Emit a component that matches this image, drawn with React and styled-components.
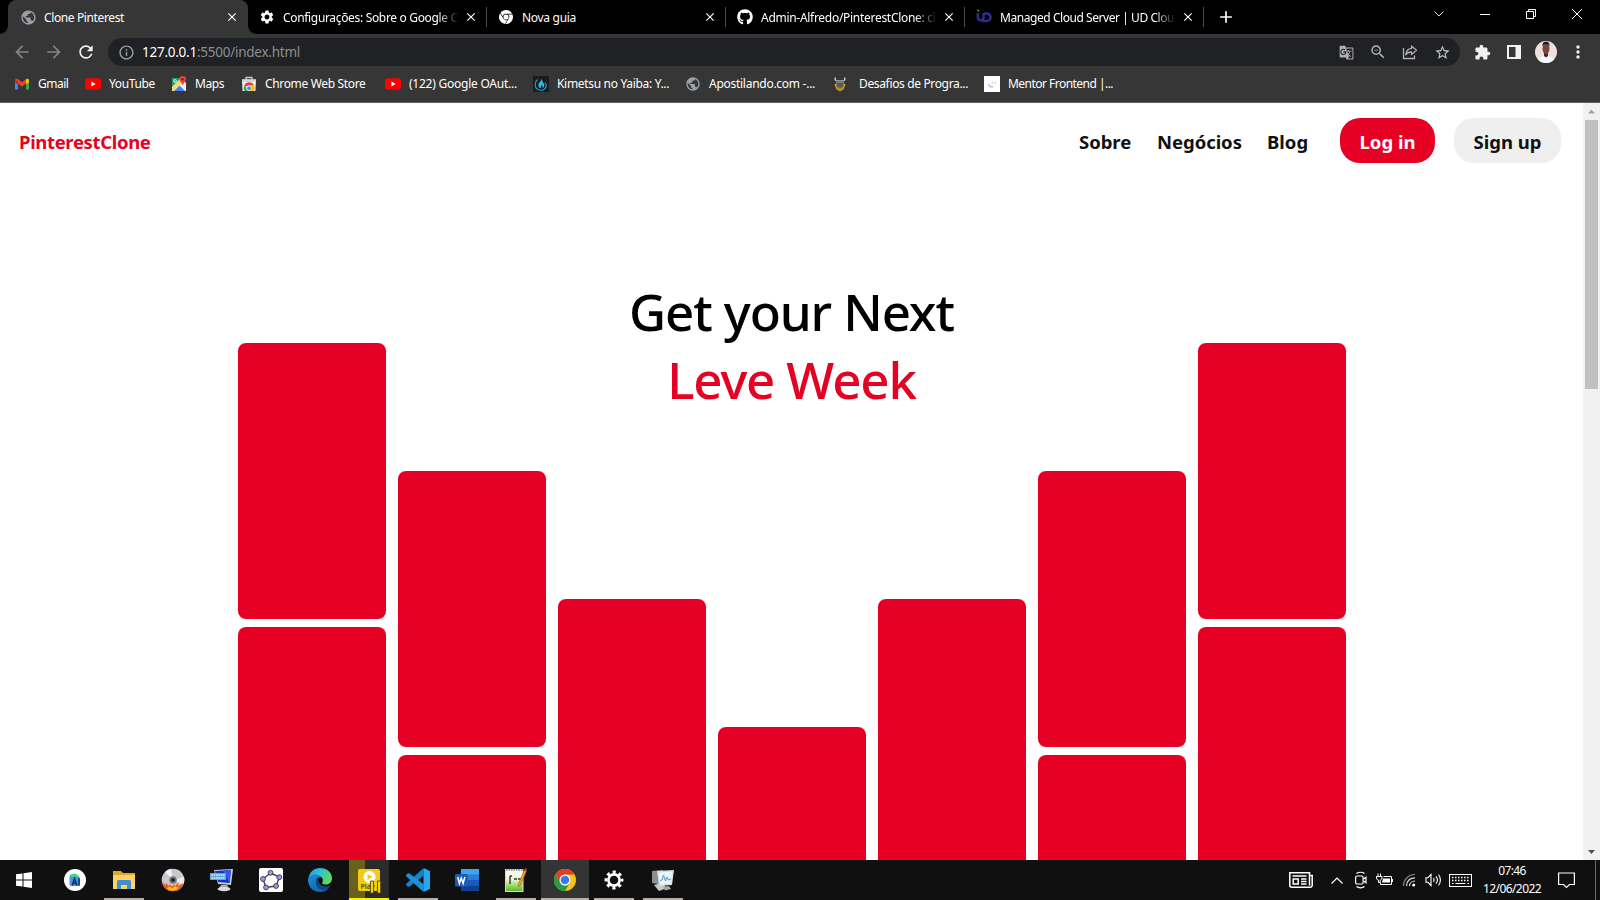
import React from "react";
import styled, { createGlobalStyle, css } from "styled-components";
import {
  MdPublic, MdSettings, MdArrowBack, MdArrowForward, MdRefresh, MdInfoOutline,
  MdGTranslate, MdZoomOut, MdStarBorder, MdExtension, MdMoreVert, MdClose, MdAdd,
} from "react-icons/md";
import { FaGithub } from "react-icons/fa";
import { SiGooglechrome } from "react-icons/si";

const RED = "#e60023";

const GlobalStyle = createGlobalStyle`
  * { box-sizing: border-box; }
  html, body { margin: 0; padding: 0; overflow: hidden; }
  body { font-family: "Noto Sans", "Open Sans", sans-serif; }
  svg { display: block; flex: none; }
`;

const Screen = styled.div`
  display: flex;
  flex-direction: column;
  width: 1600px;
  height: 900px;
  overflow: hidden;
  background: #fff;
`;

const Label = styled.span`
  font-size: ${(p) => p.$size || 12}px;
  letter-spacing: ${(p) => p.$ls || 0}px;
  white-space: nowrap;
`;

/* ---------- Tab strip ---------- */
const TabStrip = styled.div`
  display: flex;
  height: 34px;
  padding-left: 8px;
  background: #000;
  color: #fff;
`;

const Tab = styled.div`
  position: relative;
  display: flex;
  align-items: center;
  width: ${(p) => (p.$active ? 240 : 239)}px;
  height: 34px;
  padding-left: ${(p) => (p.$active ? 12 : 11)}px;
  padding-right: 9px;
  ${(p) =>
    p.$active &&
    css`
      background: #363636;
      border-radius: 8px 8px 0 0;
      &::before, &::after {
        content: "";
        position: absolute;
        bottom: 0;
        width: 8px;
        height: 8px;
      }
      &::before { left: -8px; background: radial-gradient(circle at 0 0, transparent 7.5px, #363636 8px); }
      &::after { right: -8px; background: radial-gradient(circle at 100% 0, transparent 7.5px, #363636 8px); }
    `}
`;

const TabIcon = styled.div`
  display: flex;
  align-items: center;
  justify-content: center;
  width: 16px;
  height: 16px;
`;

const TabTitle = styled.div`
  flex: 1;
  margin: 0 5px 2px 8px;
  overflow: hidden;
  line-height: 18px;
  height: 18px;
  ${(p) => p.$fade && css`mask-image: linear-gradient(90deg, #000 calc(100% - 22px), transparent 100%);`}
`;

const TabDivider = styled.i`
  width: 1px;
  height: 20px;
  margin: 7px 0 0 -1px;
  background: #4c4c4c;
`;

const NewTab = styled.div`
  display: flex;
  align-items: center;
  margin-left: 12px;
`;

const WindowButtons = styled.div`
  display: flex;
  margin-left: auto;
  height: 28px;
  & > * {
    width: 46px;
    display: flex;
    align-items: center;
    justify-content: center;
  }
`;

/* ---------- Toolbar ---------- */
const Toolbar = styled.div`
  display: flex;
  align-items: center;
  height: 36px;
  padding: 0 6px;
  background: #363636;
  color: #fff;
`;

const ToolButton = styled.div`
  display: flex;
  align-items: center;
  justify-content: center;
  width: 32px;
  height: 28px;
  color: ${(p) => p.$color || "#f1f1f1"};
`;

const Omnibox = styled.div`
  display: flex;
  align-items: center;
  width: 1352px;
  height: 28px;
  margin: 0 6px 0 6px;
  padding: 0 2px;
  border-radius: 14px;
  background: #202124;
  color: #8c8e91;
`;

const Url = styled.div`
  flex: 1;
  margin-bottom: 1px;
  line-height: 20px;
  b { font-weight: 400; color: #fff; }
`;

const Avatar = styled.div`
  width: 22px;
  height: 22px;
  border-radius: 50%;
  overflow: hidden;
`;

/* ---------- Bookmarks ---------- */
const Bookmarks = styled.div`
  display: flex;
  height: 33px;
  padding: 0 0 5px 14px;
  background: #363636;
  border-bottom: 1px solid #5f5f5f;
  color: #fff;
`;

const Bookmark = styled.div`
  display: flex;
  align-items: center;
  gap: ${(p) => p.$gap || 8}px;
  width: ${(p) => p.$width}px;
`;

/* ---------- Web page ---------- */
const Viewport = styled.div`
  display: flex;
  height: 757px;
`;

const Page = styled.main`
  width: 1583px;
  height: 757px;
  overflow: hidden;
  background: #fff;
`;

const Header = styled.header`
  display: flex;
  align-items: center;
  height: 75px;
  padding: 0 22px 0 19px;
  font-weight: 700;
  color: #111;
`;

const Brand = styled.div`
  margin-right: auto;
  padding-top: 2px;
  color: ${RED};
`;

const Nav = styled.nav`
  display: flex;
  padding-top: 2px;
`;

const NavItem = styled.a`
  width: ${(p) => p.$width}px;
`;

const Pill = styled.button`
  display: flex;
  align-items: center;
  justify-content: center;
  width: ${(p) => p.$width}px;
  height: 45px;
  margin-left: 19px;
  padding: 2px 0 0;
  border: 0;
  border-radius: 20px;
  font: inherit;
  background: ${(p) => (p.$primary ? RED : "#efefef")};
  color: ${(p) => (p.$primary ? "#fff" : "#111")};
`;

const Hero = styled.section`
  margin-top: 99px;
  height: 66px;
`;

const HeroLine = styled.h1`
  margin: 0;
  height: 68px;
  line-height: 68px;
  text-align: center;
  font-weight: 500;
  color: ${(p) => (p.$accent ? RED : "#000")};
`;

const Columns = styled.section`
  display: flex;
  justify-content: center;
  gap: 12px;
  padding-left: 1px;
`;

const Column = styled.div`
  display: flex;
  flex-direction: column;
  gap: 8px;
  padding-top: ${(p) => p.$drop}px;
`;

const Card = styled.div`
  width: 148px;
  height: 276px;
  border-radius: 8px;
  background: ${RED};
`;

const Scrollbar = styled.div`
  display: flex;
  flex-direction: column;
  align-items: center;
  width: 17px;
  background: #f1f1f1;
`;

const Thumb = styled.div`
  width: 13px;
  height: 269px;
  margin-bottom: auto;
  background: #c1c1c1;
`;

/* ---------- Taskbar ---------- */
const Taskbar = styled.div`
  display: flex;
  height: 40px;
  background: #101010;
  color: #fff;
`;

const StartButton = styled.div`
  display: flex;
  align-items: center;
  justify-content: center;
  width: 50px;
  padding-right: 2px;
`;

const TaskItem = styled.div`
  display: flex;
  align-items: center;
  justify-content: center;
  width: ${(p) => (p.$wide ? 48 : 40)}px;
  height: 40px;
  margin: 0 ${(p) => (p.$wide ? 0.5 : 4.5)}px;
  background: ${(p) => p.$bg || "transparent"};
  border-bottom: 2px solid ${(p) => p.$line || "transparent"};
  border-top: 2px solid transparent;
`;

const Tray = styled.div`
  display: flex;
  align-items: center;
  margin-left: auto;
`;

const TrayItem = styled.div`
  display: flex;
  justify-content: center;
  width: ${(p) => p.$width}px;
`;

const Clock = styled.div`
  display: flex;
  flex-direction: column;
  align-items: center;
  width: 62px;
  margin-left: 5px;
  line-height: 18px;
  padding-bottom: 1px;
`;

const ShowDesktop = styled.div`
  width: 5px;
  height: 40px;
  margin-left: 5px;
  border-left: 1px solid #6b6b6b;
`;

/* ---------- Drawings ---------- */
const YouTube = () => (
  <svg width="16" height="16" viewBox="0 0 16 16"><rect y="2.3" width="16" height="11.4" rx="2.6" fill="#f00" /><path d="M6.4 5.6v4.8L10.6 8z" fill="#fff" /></svg>
);
const Gmail = () => (
  <svg width="16" height="16" viewBox="0 0 16 16"><path d="M1 4.500V13.500h3V7z" fill="#4285f4" /><path d="M15 4.500V13.500h-3V7z" fill="#34a853" /><path d="M1 4.400C1 2.800 2.700 2.200 4 3.200L8 6.200l4-3v4.200L8 10.400 1 5.500z" fill="#ea4335" /><path d="M1 4.400v1.900l3 2.200V5z" fill="#c5221f" /><path d="M12 8.500V3.200c1.300-1 3-.4 3 1.200v1.900z" fill="#fbbc04" /></svg>
);
const Maps = () => (
  <svg width="16" height="16" viewBox="0 0 16 16"><path d="M1 2h10l4 5v8H1z" fill="#e8e8e8" /><path d="M1 2h9L1 11z" fill="#1ea362" /><path d="M3 15l5.500-5.500L14 15z" fill="#4285f4" /><path d="M1 12.500 10.500 3l1.500 2L2 15H1z" fill="#ffd84d" /><path d="M10 9.500l1-1 4 4V15z" fill="#f5f5f5" /><circle cx="4" cy="5" r="1.400" fill="none" stroke="#fff" strokeWidth=".8" /><path d="M11.700 0a3.300 3.300 0 0 1 3.300 3.300c0 2.200-2.500 3.200-3.300 6.200-.8-3-3.300-4-3.300-6.200A3.300 3.300 0 0 1 11.700 0z" fill="#ea4335" /><circle cx="11.700" cy="3.300" r="1.200" fill="#8c1e16" /></svg>
);
const WebStore = () => (
  <svg width="16" height="16" viewBox="0 0 16 16"><path d="M5 4V1.500h6V4" fill="none" stroke="#c9c9c9" strokeWidth="1.300" /><path d="M1 3.500h14l-.6 11.500H1.600z" fill="#f4f4f4" /><path d="M1 3.500h14v2.500H1z" fill="#d7d7d7" /><path d="M3 11a5.200 5.200 0 0 1 10-1.500H8z" fill="#ea4335" /><path d="M3 10A5.500 5.500 0 0 0 3.600 15H7l-2-4z" fill="#34a853" /><path d="M9 9.500h4a5 5 0 0 1 0 5.500H8z" fill="#fbbc04" /><circle cx="8" cy="12.300" r="2.300" fill="#4285f4" stroke="#fff" strokeWidth=".7" /></svg>
);
const Flame = () => (
  <svg width="16" height="16" viewBox="0 0 16 16"><rect width="16" height="16" fill="#1b1c1f" /><path d="M4.500 3.500C1.500 6 1.200 11 4.500 13.200c3 2 7.500 1 8.500-2.200.6-2-.3-3.500-1-4.500" fill="none" stroke="#1fa3c0" strokeWidth="1.200" /><path d="M8.500 2.500c.5 2-2.500 4-3 6-.4 2 1 3.600 2.500 3.800-.8-1.600.3-2.600 1-4 .6 1.300.2 2.500.6 3.700 2-.8 2.200-3.500.6-5.200C9 5.300 9.300 3.700 8.500 2.500z" fill="#29c5e6" /></svg>
);
const Bull = () => (
  <svg width="16" height="16" viewBox="0 0 16 16"><path d="M3.500 1.500c-1 2 0 3.500 2 3.500h5c2 0 3-1.500 2-3.500" fill="none" stroke="#d5d5d5" strokeWidth="1.400" /><path d="M4 4.500h8v4.500H4z" fill="#77797b" /><path d="M2.500 8h11l-2 5.500L8 15.500l-3.500-2z" fill="#e4b324" /><path d="M4.500 7h7v3.500L8 12l-3.500-1.500z" fill="#55585b" /><path d="M4 12h8M5.500 14h5" stroke="#6e5514" strokeWidth=".8" /></svg>
);
const Mentor = () => (
  <svg width="16" height="16" viewBox="0 0 16 16"><rect width="16" height="16" fill="#fff" /><path d="M4.500 8c.3 2.800 3 3.500 5 2.300" fill="none" stroke="#a8b4e4" strokeWidth="1.200" /><path d="M8.300 5.500v2.500M11.500 5.500v2.500M9.500 6.700h1" stroke="#b8e2e8" strokeWidth="1" /></svg>
);
const UdLogo = () => (
  <svg width="16" height="16" viewBox="0 0 16 16"><path d="M1.800 4v4.200c0 3.800 5.400 4.200 5.800.6V4" fill="none" stroke="#2b3190" strokeWidth="2.300" /><path d="M7.500 4.500h3.300a3.800 3.800 0 0 1 0 7.600H6.500" fill="none" stroke="#2b3190" strokeWidth="2.500" /><path d="M.2.300 3.500 1.300 2.600 3z" fill="#31b34a" /></svg>
);
const Share = () => (
  <svg width="18" height="18" viewBox="0 0 18 18" fill="none" stroke="currentColor" strokeWidth="1.300"><path d="M2.500 5v10.500h11V12.500" /><path d="M10.500 3l5 4.300-5 4.300V9C8 9 6 9.700 4.800 12 5 8.500 7 5.700 10.500 5.400z" strokeLinejoin="round" /></svg>
);
const SidePanel = () => (
  <svg width="14" height="14" viewBox="0 0 14 14"><path d="M0 0h14v14H0z M2 2v10h6.500V2z" fill="#f1f1f1" fillRule="evenodd" /></svg>
);
const Portrait = () => (
  <svg width="22" height="22" viewBox="0 0 22 22"><rect width="22" height="22" fill="#ece1dc" /><path d="M2 22c0-5 4-7 9-7s9 2 9 7z" fill="#f4fbff" /><path d="M9 11h4v4l-2 1.500L9 15z" fill="#4a2a20" /><ellipse cx="11" cy="7.800" rx="3.500" ry="5.200" fill="#744739" /><path d="M7.500 5.500C7 2 9 .8 11 .8S15 2 14.500 5.500C14 4 13 3 11 3S8 4 7.500 5.500z" fill="#1e1514" /></svg>
);
const Windows = () => (
  <svg width="16" height="16" viewBox="0 0 16 16" fill="#fff"><path d="M0 2.300 6.500 1.400V7.500H0zM7.500 1.200 16 0V7.500H7.500zM0 8.500H6.500v6.100L0 13.700zM7.500 8.500H16V16L7.500 14.800z" /></svg>
);
const AndroidStudio = () => (
  <svg width="22" height="22" viewBox="0 0 22 22"><circle cx="11" cy="11" r="11" fill="#fff" /><path d="M5.500 7.500a2 2 0 0 1 2-2H12l4 3.500v8H7.500a2 2 0 0 1-2-2z" fill="#4c8df6" /><path d="M6.500 7.500C7 5 9.500 3.800 12 4.800L15.500 8H6.500z" fill="#3ddc84" /><path d="M8.300 16.500 10.500 9.500l2.300 7M9.300 14.200h2.800M15 9.300v7.200" stroke="#0b3558" strokeWidth="1.500" fill="none" /></svg>
);
const Explorer = () => (
  <svg width="22" height="20" viewBox="0 0 22 20"><path d="M0 1h8l2 2h12v16H0z" fill="#e8a61c" /><path d="M0 5h22v14H0z" fill="#fdd367" /><path d="M4 19v-7.500a1.500 1.500 0 0 1 1.500-1.500h11a1.500 1.500 0 0 1 1.500 1.500V19h-4v-4H8v4z" fill="#3f8fd2" /></svg>
);
const Disc = () => (
  <svg width="24" height="24" viewBox="0 0 24 24"><circle cx="12" cy="12" r="11.300" fill="#c9c7cd" /><path d="M12 12 4 4a11.300 11.300 0 0 1 6-3.200z" fill="#f4f1f8" /><path d="M12 12 23 9a11 11 0 0 1-1 8z" fill="#efe9ec" /><path d="M1.500 14l3 3 1-2 2 3 2-2 1 3 3-3 0 3 4-5-.500 4 5.500-3c-1 4-4 7.500-9 8C6 23.500 2 20 1.500 14z" fill="#ef5a12" /><path d="M6 20l3-1.500 2 2 3-2 2 1 2-1c-2 3-4 4-6 4s-5-.5-6-2.500z" fill="#ffc51d" /><circle cx="12" cy="12" r="3.800" fill="#777" /><circle cx="12" cy="12" r="1.800" fill="#181818" /></svg>
);
const RemotePc = () => (
  <svg width="24" height="24" viewBox="0 0 24 24"><path d="M4 2 23 1l-2 16-13-1z" fill="#c8ccd0" /><path d="M5 3l16-1-1.500 13L8 14z" fill="#1631c9" /><path d="M13 3l8-1-1.500 13z" fill="#3558ea" /><path d="M0 5h16v7H0z" fill="#58a8dc" /><path d="M1.500 7h13M1.500 10h13" stroke="#e7f4ff" strokeWidth="1.300" strokeDasharray="1.500 .8" /><path d="M11 17h6l2 3H9z" fill="#a8acb0" /><ellipse cx="14" cy="21" rx="6.500" ry="2.200" fill="#d8dadc" /></svg>
);
const Geogebra = () => (
  <svg width="24" height="24" viewBox="0 0 24 24"><rect width="24" height="24" rx="2" fill="#fff" /><path d="M11.500 5 20.500 9l-3.500 9-10 1.500L4 11z" fill="none" stroke="#444" strokeWidth="1.400" /><g fill="#9a9aff" stroke="#333" strokeWidth=".9"><circle cx="11.500" cy="4.800" r="2.400" /><circle cx="20.300" cy="9.200" r="2.400" /><circle cx="17" cy="18" r="2.400" /><circle cx="7" cy="19.400" r="2.400" /><circle cx="4" cy="11" r="2.400" /></g></svg>
);
const Edge = () => (
  <svg width="24" height="24" viewBox="0 0 24 24">
    <defs>
      <linearGradient id="eg1" x1="0" y1="0" x2="1" y2=".5"><stop offset="0" stopColor="#1b9de2" /><stop offset=".5" stopColor="#2cc3d2" /><stop offset="1" stopColor="#5fda5a" /></linearGradient>
      <linearGradient id="eg2" x1="0" y1="0" x2="1" y2="1"><stop offset="0" stopColor="#1b8fd8" /><stop offset="1" stopColor="#0c59a4" /></linearGradient>
    </defs>
    <path d="M.6 10C1.500 4 6 0 12 0c7 0 12 4.500 12 10.200 0 4-3 6.300-6.300 6.300-3 0-4-1-3.500-2 1.500-2 .6-6.500-4.200-6.500C5 8 1.500 10 0 13.500z" fill="url(#eg1)" />
    <path d="M0 12c1-4.500 5-5.800 8-5.500 2.500.2 5 1.500 5.500 3.500C11 8.500 8 10.500 8 14c0 5 5 8 9 7.500 1.500-.2 3-.8 4-1.200C19.500 22.500 16 24 12 24 5 24 0 18.500 0 12z" fill="url(#eg2)" />
    <path d="M8 14c0-1.800.8-3.500 2-4.500-.8 6 4.500 9.500 9 9 1.300-.2 2.700-.8 3.600-1.200-1.100 2.500-3.500 4.100-5.600 4.200C12 22 8 18.500 8 14z" fill="#12498c" />
  </svg>
);
const PlayNote = styled.div`
  position: relative;
  width: 22px;
  height: 22px;
  border-radius: 2px;
  background: #f2cb14;
  font-size: 7px;
  font-weight: 600;
  line-height: 7px;
  padding: 14px 0 0 3px;
  color: #5c4d08;
  svg { position: absolute; left: 0; top: 0; }
`;
const PlayIcon = () => (
  <PlayNote>Play
    <svg width="26" height="25" viewBox="0 0 26 25"><circle cx="11.500" cy="8" r="6" fill="#fff" /><path d="M9.500 5v6l5-3z" fill="#f2cb14" /><path d="M12.500 12h3v12h-3zM19.500 12h3v12h-3z" fill="#f6d90d" stroke="#5f5410" strokeWidth="1" /></svg>
  </PlayNote>
);
const VsCode = () => (
  <svg width="24" height="24" viewBox="0 0 24 24"><path d="M17.500 0 24 3v18l-6.500 3z" fill="#2aa5ef" /><path d="M17.500 0 .5 15.500 0 17l2 1.800 1.500-.2L18 7.500z" fill="#1583cb" /><path d="M17.500 24 .5 8.500 0 7l2-1.800 1.500.2L18 16.500z" fill="#1b93dc" /></svg>
);
const Word = () => (
  <svg width="24" height="22" viewBox="0 0 24 22"><rect x="6" width="18" height="22" rx="1.500" fill="#2b7cd3" /><path d="M6 0h18v5.500H6z" fill="#41a5ee" /><path d="M6 11h18v5.500H6z" fill="#185abd" /><path d="M6 16.500h18V20.500a1.500 1.500 0 0 1-1.500 1.500H6z" fill="#103f91" /><rect y="5" width="12.500" height="12.500" rx="1" fill="#185abd" /><path d="M2.700 8l1.700 6.500L6.200 9l1.900 5.500L9.800 8" fill="none" stroke="#fff" strokeWidth="1.500" /></svg>
);
const Notepad = () => (
  <svg width="22" height="24" viewBox="0 0 22 24"><defs><linearGradient id="np" x1="0" y1="0" x2="0" y2="1"><stop offset="0" stopColor="#fff" /><stop offset=".45" stopColor="#e9f6d0" /><stop offset="1" stopColor="#54b814" /></linearGradient></defs><rect x=".5" y="1.500" width="17.500" height="22" fill="url(#np)" stroke="#d8d8d8" /><path d="M1 2h17" stroke="#999" strokeWidth="2" strokeDasharray="1.500 1" /><path d="M5 8v8M5 8h2M9 11h3M13 11h3" stroke="#333" strokeWidth="1.400" /><path d="M19.500 2l2 1-6 14-2 1.500v-2.500z" fill="#f5a71c" stroke="#96590e" strokeWidth=".6" /><path d="M19.500 2l2 1 .5-2-1.500-1z" fill="#b33" /></svg>
);
const ChromeColor = () => (
  <svg width="22" height="22" viewBox="0 0 48 48"><circle cx="24" cy="24" r="24" fill="#fbc116" /><path d="M3.200 12A24 24 0 0 1 44.800 12H24A12 12 0 0 0 13.600 18L13.600 30z" fill="#e33b2e" /><path d="M3.200 12A24 24 0 0 0 24 48L34.400 30A12 12 0 0 1 13.600 30z" fill="#269b48" /><circle cx="24" cy="24" r="12" fill="#fff" /><circle cx="24" cy="24" r="9.500" fill="#3a7de8" /></svg>
);
const Gear = () => (
  <svg width="20" height="20" viewBox="0 0 20 20"><circle cx="10" cy="10" r="8" fill="none" stroke="#fff" strokeWidth="2.800" strokeDasharray="3.140 3.140" strokeDashoffset="1.570" /><circle cx="10" cy="10" r="5.600" fill="none" stroke="#fff" strokeWidth="2.600" /></svg>
);
const Monitor = () => (
  <svg width="24" height="24" viewBox="0 0 24 24"><path d="M1 3l11-1v15l-11-2z" fill="#8b8f93" /><path d="M3 17l8-2 5 5-8 3z" fill="#c8cacc" /><path d="M6 3l17-1-2 15-13 1z" fill="#d9dddf" /><path d="M7.500 4.500l14-1-1.600 12-11 1z" fill="#eaf6fc" /><path d="M9 13l2-1 1.500-5 2 6 1.500-4 1.500 3 2.500-1" fill="none" stroke="#4a9ac8" strokeWidth="1" /><path d="M12 19l6-1 2 3-6 1.500z" fill="#a3a7aa" /></svg>
);
const News = () => (
  <svg width="24" height="16" viewBox="0 0 24 16" fill="none" stroke="#fff" strokeWidth="1.500"><path d="M20.500 3.500h2.700v9.500a2 2 0 0 1-2 2.200H2.800a2 2 0 0 1-2-2V.8h19.700v12.700" /><path d="M3.500 4h14M12 7h5.500M12 9.500h5.500M12 12h5.500" strokeWidth="1.300" /><rect x="4.200" y="7" width="5" height="5" /></svg>
);
const Caret = () => (
  <svg width="12" height="7" viewBox="0 0 12 7" fill="none" stroke="#fff" strokeWidth="1.200"><path d="M.5 6.500 6 1l5.500 5.500" /></svg>
);
const MeetNow = () => (
  <svg width="14" height="18" viewBox="0 0 14 18" fill="none" stroke="#fff" strokeWidth="1.200"><rect x="1.600" y="5" width="7.500" height="8" rx="1.500" /><path d="M9.500 8l2.500-1.800v5.600L9.500 10" /><path d="M2.500 2.500C4.500.8 8.500.8 10.500 2.500M2.500 15.500c2 1.700 6 1.700 8 0" /></svg>
);
const Battery = () => (
  <svg width="17" height="14" viewBox="0 0 17 14" fill="none" stroke="#fff"><path d="M2 .5v3M4.500 .5v3M.5 3.500h5.500v1.500a2.500 2.500 0 0 1-1.800 2.200V9.500H2.500V7.200A2.500 2.500 0 0 1 .5 5zM7.500 3.500h8v8H4.500v-2" /><path d="M16.400 6v3" strokeWidth="1.100" /><path d="M7 5.500h7v4H6z" fill="#fff" stroke="none" /></svg>
);
const Wifi = () => (
  <svg width="14" height="14" viewBox="0 0 14 14" fill="none" strokeWidth="1.200"><path d="M1.500 13C1.500 6.500 6.500 1.500 13 1.500" stroke="#8b8b8b" /><path d="M4.500 13C4.500 8 8 4.800 13 4.800M7.500 13c0-3 2.500-5 5.500-5" stroke="#dedede" /><circle cx="11.700" cy="12" r="1.500" fill="#fff" /></svg>
);
const Volume = () => (
  <svg width="17" height="14" viewBox="0 0 17 14" fill="none" stroke="#fff" strokeWidth="1.100"><path d="M1 4.700h2L6 1.500v11L3 9.300H1zM8.500 5c.9 1.200.9 2.800 0 4M11 3.300c1.700 2.200 1.700 5.200 0 7.400M13.500 1.500c2.500 3.200 2.500 7.800 0 11" /></svg>
);
const Keyboard = () => (
  <svg width="23" height="13" viewBox="0 0 23 13" fill="none" stroke="#fff"><rect x=".5" y=".5" width="22" height="12" /><path d="M3 3.500h17M3 6.500h17" strokeWidth="1.300" strokeDasharray="1.500 1.500" /><path d="M3 9.500h1.500M6.500 9.500h10M18.500 9.500H20" /></svg>
);
const Notification = () => (
  <svg width="17" height="17" viewBox="0 0 17 17" fill="none" stroke="#fff" strokeWidth="1.200"><path d="M.6 1h15.800v11.500h-5L8.500 15.500l-3-3H.6z" /></svg>
);
const ScrollArrow = ({ down }) => (
  <svg width="17" height="17" viewBox="0 0 17 17"><path d={down ? "M5 7h7l-3.500 4z" : "M5 10.500h7L8.500 6.500z"} fill={down ? "#505050" : "#a3a3a3"} /></svg>
);

/* ---------- Data ---------- */
const tabs = [
  { title: "Clone Pinterest", icon: <MdPublic size={17} color="#9aa0a6" />, active: true, ls: -0.38 },
  { title: "Configurações: Sobre o Google C", icon: <MdSettings size={16} />, fade: true, ls: -0.33 },
  { title: "Nova guia", icon: <SiGooglechrome size={14} />, ls: -0.3 },
  { title: "Admin-Alfredo/PinterestClone: cl", icon: <FaGithub size={16} />, fade: true, ls: -0.29 },
  { title: "Managed Cloud Server | UD Clou", icon: <UdLogo />, fade: true, ls: -0.442 },
];

const bookmarks = [
  { title: "Gmail", icon: <Gmail />, width: 71, ls: -0.5 },
  { title: "YouTube", icon: <YouTube />, width: 86, ls: -0.36 },
  { title: "Maps", icon: <Maps />, width: 70, ls: -0.4 },
  { title: "Chrome Web Store", icon: <WebStore />, width: 144, ls: -0.34 },
  { title: "(122) Google OAut...", icon: <YouTube />, width: 148, ls: -0.24 },
  { title: "Kimetsu no Yaiba: Y...", icon: <Flame />, width: 152, ls: -0.32 },
  { title: "Apostilando.com -...", icon: <MdPublic size={16} color="#9aa0a6" />, width: 147, ls: -0.27 },
  { title: "Desafios de Progra...", icon: <Bull />, width: 152, gap: 11, ls: -0.35 },
  { title: "Mentor Frontend |...", icon: <Mentor />, width: 150, ls: -0.53 },
];

const GREY = "#b3afac";
const tasks = [
  { icon: <AndroidStudio /> },
  { icon: <Explorer />, line: GREY },
  { icon: <Disc /> },
  { icon: <RemotePc /> },
  { icon: <Geogebra /> },
  { icon: <Edge /> },
  { icon: <PlayIcon />, line: "#fff200", bg: "linear-gradient(90deg, #67621c 16px, #2b2b2b 16px)" },
  { icon: <VsCode />, line: GREY },
  { icon: <Word /> },
  { icon: <Notepad />, line: GREY },
  { icon: <ChromeColor />, line: GREY, bg: "#343434", wide: true },
  { icon: <Gear />, line: GREY },
  { icon: <Monitor />, line: GREY },
];

const drops = [0, 128, 256, 384, 256, 128, 0];

export default function App() {
  return (
    <Screen>
      <GlobalStyle />
      <TabStrip>
        {tabs.map((t) => (
          <React.Fragment key={t.title}>
            <Tab $active={t.active}>
              <TabIcon>{t.icon}</TabIcon>
              <TabTitle $fade={t.fade}><Label $ls={t.ls}>{t.title}</Label></TabTitle>
              <MdClose size={14} />
            </Tab>
            {!t.active && <TabDivider />}
          </React.Fragment>
        ))}
        <NewTab><MdAdd size={20} /></NewTab>
        <WindowButtons>
          <div><svg width="10" height="6" viewBox="0 0 10 6" fill="none" stroke="#ddd"><path d="M.5.5 5 5 9.500.5" /></svg></div>
          <div><svg width="10" height="1" viewBox="0 0 10 1"><rect width="10" height="1" fill="#fff" /></svg></div>
          <div><svg width="10" height="10" viewBox="0 0 10 10" fill="none" stroke="#fff"><path d="M.5 2.500h7v7h-7zM2.500 2.500V.5h7v7H7.500" /></svg></div>
          <div><svg width="10" height="10" viewBox="0 0 10 10" stroke="#fff"><path d="M0 0l10 10M10 0 0 10" /></svg></div>
        </WindowButtons>
      </TabStrip>
      <Toolbar>
        <ToolButton $color="#858585"><MdArrowBack size={20} /></ToolButton>
        <ToolButton $color="#858585"><MdArrowForward size={20} /></ToolButton>
        <ToolButton><MdRefresh size={20} /></ToolButton>
        <Omnibox>
          <ToolButton $color="#9aa0a6"><MdInfoOutline size={17} /></ToolButton>
          <Url><Label $size={13.5} $ls={-0.25}><b>127.0.0.1</b>:5500/index.html</Label></Url>
          <ToolButton $color="#b0b0b0"><MdGTranslate size={15} /></ToolButton>
          <ToolButton $color="#b0b0b0"><MdZoomOut size={18} /></ToolButton>
          <ToolButton $color="#b0b0b0"><Share /></ToolButton>
          <ToolButton $color="#c4c4c4"><MdStarBorder size={17} /></ToolButton>
        </Omnibox>
        <ToolButton><MdExtension size={17} /></ToolButton>
        <ToolButton><SidePanel /></ToolButton>
        <ToolButton><Avatar><Portrait /></Avatar></ToolButton>
        <ToolButton><MdMoreVert size={20} /></ToolButton>
      </Toolbar>
      <Bookmarks>
        {bookmarks.map((b) => (
          <Bookmark key={b.title} $width={b.width} $gap={b.gap}>
            {b.icon}<Label $ls={b.ls}>{b.title}</Label>
          </Bookmark>
        ))}
      </Bookmarks>
      <Viewport>
        <Page>
          <Header>
            <Brand><Label $size={18.5} $ls={-0.35}>PinterestClone</Label></Brand>
            <Nav>
              <NavItem $width={78}><Label $size={18.5} $ls={-0.05}>Sobre</Label></NavItem>
              <NavItem $width={110}><Label $size={18.5} $ls={-0.05}>Negócios</Label></NavItem>
              <NavItem $width={54}><Label $size={18.5}>Blog</Label></NavItem>
            </Nav>
            <Pill $primary $width={95}><Label $size={18.5}>Log in</Label></Pill>
            <Pill $width={107}><Label $size={18.5}>Sign up</Label></Pill>
          </Header>
          <Hero>
            <HeroLine><Label $size={51} $ls={-1.1}>Get your Next</Label></HeroLine>
            <HeroLine $accent><Label $size={51} $ls={-1.15}>Leve Week</Label></HeroLine>
          </Hero>
          <Columns>
            {drops.map((d, i) => (
              <Column key={i} $drop={d}><Card /><Card /></Column>
            ))}
          </Columns>
        </Page>
        <Scrollbar><ScrollArrow /><Thumb /><ScrollArrow down /></Scrollbar>
      </Viewport>
      <Taskbar>
        <StartButton><Windows /></StartButton>
        {tasks.map((t, i) => (
          <TaskItem key={i} $line={t.line} $bg={t.bg} $wide={t.wide}>{t.icon}</TaskItem>
        ))}
        <Tray>
          <TrayItem $width={48}><News /></TrayItem>
          <TrayItem $width={24}><Caret /></TrayItem>
          <TrayItem $width={24}><MeetNow /></TrayItem>
          <TrayItem $width={23}><Battery /></TrayItem>
          <TrayItem $width={26}><Wifi /></TrayItem>
          <TrayItem $width={22}><Volume /></TrayItem>
          <TrayItem $width={32}><Keyboard /></TrayItem>
          <Clock><Label $ls={-0.6}>07:46</Label><Label $ls={-0.58}>12/06/2022</Label></Clock>
          <TrayItem $width={47}><Notification /></TrayItem>
          <ShowDesktop />
        </Tray>
      </Taskbar>
    </Screen>
  );
}
